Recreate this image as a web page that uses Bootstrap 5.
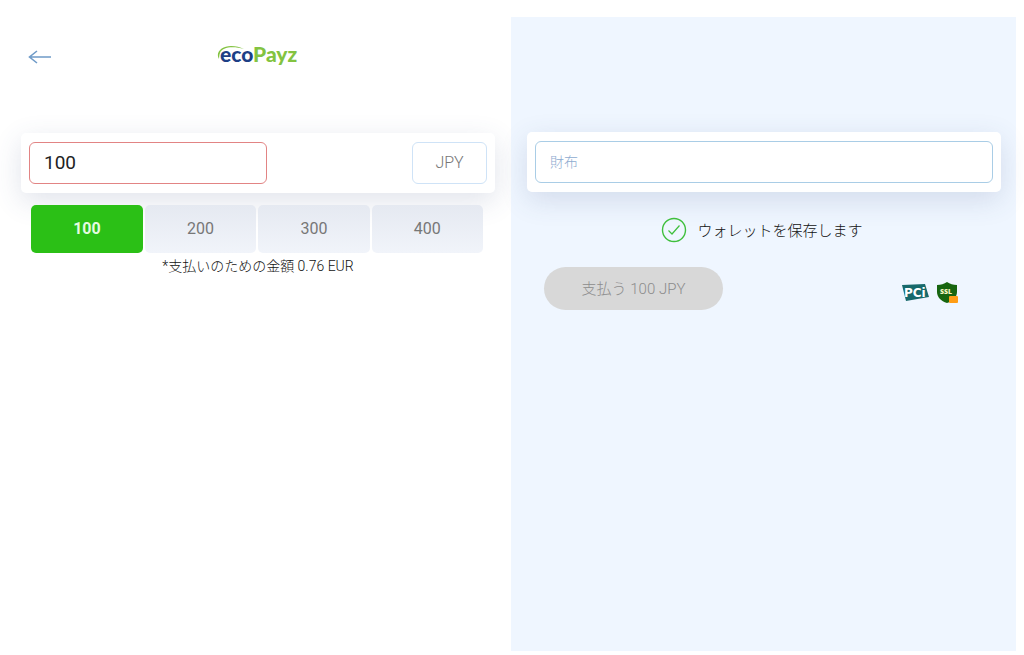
<!DOCTYPE html>
<html lang="ja">
<head>
<meta charset="utf-8">
<meta name="viewport" content="width=device-width, initial-scale=1">
<title>ecoPayz</title>
<link rel="stylesheet" href="https://cdn.jsdelivr.net/npm/bootstrap@5.3.0/dist/css/bootstrap.min.css">
<style>
body { font-family: Roboto, "Noto Sans CJK JP", sans-serif; font-weight: 300; background: #fff; color: #111; }
.checkout { min-height: 100vh; padding: 17px 8px 4px 6px; }
.pane { padding: 0 16px; }
.pane-amount { padding-left: 15px; }
.pane-wallet { background: #eff6ff; padding-top: 115px; padding-right: 15px; }
.pane-head { height: 116px; padding: 25px 7px 0; }
.back-link { width: 24px; line-height: 1; padding-top: 6px; }
.logo-name { font: 900 21px Lato, sans-serif; fill: #1d3f86; }
.field-box { background: #fff; border-radius: 5px; height: 60px; padding: 9px 8px; box-shadow: 0 8px 28px rgba(60, 80, 130, .16); }
.field-box .form-control { height: 42px; border-radius: 6px; padding: 0 14px; background: #fff; box-shadow: none; }
.field-box .amount-input { width: 238px; border-color: #e28484; font-size: 19px; font-weight: 400; color: #222; padding-bottom: 2px; }
.currency { width: 75px; height: 42px; border: 1px solid #cfe3f7; border-radius: 6px; background: #fff; color: #777; font-size: 16px; font-weight: 300; }
.field-box .wallet-input { border-color: #a9cde6; font-size: 14px; }
.wallet-input::placeholder { color: #8eabd0; font-weight: 300; }
.presets { gap: 2px; margin: 12px 12px 0 10px; }
.preset { height: 48px; border: 0; border-radius: 5px; font-size: 16px; color: #777; font-weight: 400; background: linear-gradient(#e5e9f1, #f1f4fa); }
.preset.active { background: #2bc016; color: #e4fbe0; font-weight: 700; }
.note { font-size: 14px; line-height: 20px; margin-top: 3px; }
.save-row { margin-top: 24px; gap: 10px; padding-right: 4px; font-size: 15px; line-height: 28px; }
.save-row label { padding-top: 2px; line-height: 26px; }
.save-check { appearance: none; width: 26px; height: 26px; margin: 0; border: 0; background: url("data:image/svg+xml,%3Csvg xmlns='http://www.w3.org/2000/svg' viewBox='0 0 26 26' fill='none' stroke='%233fbf3c'%3E%3Ccircle cx='13' cy='13' r='11.5' stroke-width='1.4'/%3E%3Cpath d='M7.5 13.5l3.5 3.5 7.500-8.500' stroke-width='1.200'/%3E%3C/svg%3E") center / 26px; }
.pay-row { margin-top: 23px; padding: 0 42px 0 17px; }
.pay { width: 179px; height: 43px; border: 0; border-radius: 22px; background: #d8d8d8; color: #8c8c8c; font-size: 15px; font-weight: 300; padding-top: 3px; }
.seals { gap: 6px; padding-top: 8px; }
</style>
</head>
<body>
<main class="checkout container-fluid d-flex">
  <div class="row g-0 flex-grow-1">
    <section class="col-6 pane pane-amount">
      <header class="pane-head d-flex">
        <a class="back-link" href="#" aria-label="戻る">
          <svg width="24" height="16" viewBox="0 0 24 16" fill="none" stroke="#6f9bc8" stroke-width="1.600"><path d="M23 8H1.500M9 2L1.500 8 9 14"/></svg>
        </a>
        <div class="flex-grow-1 text-center pe-4">
          <svg width="84" height="28" viewBox="0 0 84 28" role="img" aria-label="ecoPayz">
            <path d="M3 17C-1 10 6 4 15 4c5 0 9 1 13 3C17 4 6 5 4 11c-.8 2-.8 4-1 6z" fill="#83c341"/>
            <text class="logo-name" x="4" y="20">eco<tspan fill="#83c341">Payz</tspan></text>
          </svg>
        </div>
      </header>
      <div class="field-box d-flex justify-content-between">
        <input class="form-control amount-input" type="text" value="100" aria-label="金額">
        <button class="currency" type="button">JPY</button>
      </div>
      <div class="presets d-flex">
        <button class="preset active flex-fill" type="button">100</button>
        <button class="preset flex-fill" type="button">200</button>
        <button class="preset flex-fill" type="button">300</button>
        <button class="preset flex-fill" type="button">400</button>
      </div>
      <p class="note text-center mb-0">*支払いのための金額 0.76 EUR</p>
    </section>
    <section class="col-6 pane pane-wallet">
      <div class="field-box">
        <input class="form-control wallet-input" type="text" placeholder="財布" aria-label="財布">
      </div>
      <div class="save-row d-flex justify-content-center align-items-center">
        <input class="save-check" type="checkbox" id="save" checked>
        <label for="save">ウォレットを保存します</label>
      </div>
      <div class="pay-row d-flex justify-content-between align-items-center">
        <button class="pay" type="button" disabled>支払う 100 JPY</button>
        <div class="seals d-flex">
          <svg width="28" height="22" viewBox="0 0 28 22" role="img" aria-label="PCI">
            <path d="M1 3l23-1 4 13-23 4z" fill="#17696b"/>
            <text x="3" y="15" font-family="DejaVu Sans, sans-serif" font-weight="700" font-size="12" fill="#fff">PCi</text>
          </svg>
          <svg width="24" height="22" viewBox="0 0 24 22" role="img" aria-label="SSL">
            <path d="M12 0c3 2 6 3 10 3v7c0 5-4 9-10 11C6 19 2 15 2 10V3c4 0 7-1 10-3z" fill="#17650f"/>
            <text x="5" y="12" font-family="Open Sans, sans-serif" font-weight="800" font-size="7" fill="#f4f4c0">SSL</text>
            <rect x="14" y="14" width="9" height="7" rx="1" fill="#ff9d15"/>
          </svg>
        </div>
      </div>
    </section>
  </div>
</main>
<script src="https://cdn.jsdelivr.net/npm/bootstrap@5.3.0/dist/js/bootstrap.bundle.min.js"></script>
</body>
</html>
